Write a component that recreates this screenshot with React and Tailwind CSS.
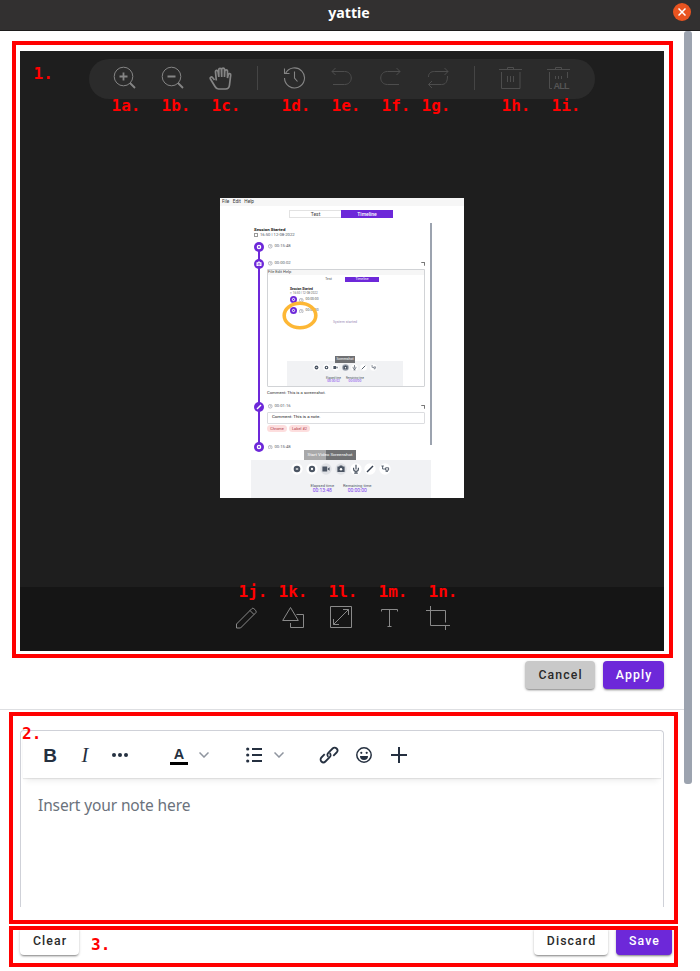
import React from "react";

const Icon = ({ children, w = 24, className = "", sw = 1 }) => (
  <svg width={w} height={w} viewBox="0 0 24 24" fill="none" stroke="currentColor" strokeWidth={sw} className={`shrink-0 ${className}`}>
    {children}
  </svg>
);

const Note = ({ className, children }) => (
  <span className={`absolute font-['DejaVu_Sans_Mono',monospace] text-[16px] leading-4 font-bold whitespace-pre text-[#ff0000] ${className}`}>
    {children}
  </span>
);

const Btn = ({ className, children }) => (
  <button className={`flex h-7 shrink-0 items-center justify-center rounded-[4px] pt-px pl-px font-[Roboto,sans-serif] text-[12.3px] font-medium tracking-[1.1px] shadow-[0_2px_2px_-1px_rgba(0,0,0,0.35),0_1px_3px_rgba(0,0,0,0.22)] ${className}`}>
    {children}
  </button>
);

const Dot = ({ small, kind = "gear" }) => (
  <svg viewBox="0 0 20 20" className={`relative shrink-0 ${small ? "size-[7px]" : "size-[10px]"}`}>
    <circle cx="10" cy="10" r="10" fill="#6d28d9" />
    {kind === "gear" && <circle cx="10" cy="10" r="3.2" fill="none" stroke="#fff" strokeWidth="2.8" />}
    {kind === "camera" && (
      <g>
        <path d="M5 6.500h2.500l1-1.500h3l1 1.500H15V14H5z" fill="#fff" />
        <circle cx="10" cy="10.300" r="2" fill="#fff" stroke="#6d28d9" strokeWidth="1.300" />
      </g>
    )}
    {kind === "pencil" && <path d="M6 14l8-8" stroke="#fff" strokeWidth="3" />}
  </svg>
);

const Clock = () => (
  <svg viewBox="0 0 10 10" className="size-[4.5px] shrink-0" fill="none" stroke="#6b7280">
    <circle cx="5" cy="5" r="4.2" />
    <path d="M5 2.5V5h2" />
  </svg>
);

const Controls = ({ small }) => {
  const shapes = [
    <g key="a"><circle cx="10" cy="10" r="5.5" fill="#4b5563" /><path d="M8 10h4" stroke="#fff" strokeWidth="2" /></g>,
    <circle key="b" cx="10" cy="10" r="3.6" fill="none" stroke="#4b5563" strokeWidth="3.4" />,
    <path key="c" d="M4 6h8v8H4zM13 9l3-2v6l-3-2z" fill="#4b5563" />,
    <g key="d"><path d="M4 6h3l1-2h4l1 2h3v9H4z" fill="#4b5563" /><circle cx="10" cy="10.5" r="2" fill="#fff" /></g>,
    <path key="e" d="M10 3v8M6 8v2a4 4 0 008 0V8M10 14v3M7 17h6" fill="none" stroke="#4b5563" strokeWidth="2" />,
    <path key="f" d="M5 15L15 5" stroke="#374151" strokeWidth="2.4" />,
    <path key="g" d="M4 5h4M6 5v5h5M11 8h5v4h-5zM11 14h4" fill="none" stroke="#4b5563" strokeWidth="1.5" />,
  ];
  return (
    <div className={`flex justify-center ${small ? "gap-[2.4px]" : "gap-[2.7px]"}`}>
      {shapes.map((s, i) => (
        <svg key={i} viewBox="0 0 20 20" className={small ? "size-[7px]" : "size-[12px]"}>
          <circle cx="10" cy="10" r="9.5" fill={i === 3 || (i === 2 && !small) ? (small ? "#9ca3af" : "#dfe1e5") : "#fff"} />
          {s}
        </svg>
      ))}
    </div>
  );
};

const Times = ({ small }) => (
  <div className={`flex justify-center text-center ${small ? "gap-[5px] text-[2.6px] leading-[3px]" : "gap-[9px] text-[4.1px] leading-[5px]"} text-[#4b5563]`}>
    <div>
      <div>Elapsed time</div>
      <div className={`text-[#7c3aed] ${small ? "text-[3.3px]" : "text-[5px]"}`}>{small ? "00:00:02" : "00:13:48"}</div>
    </div>
    <div>
      <div>Remaining time</div>
      <div className={`text-[#7c3aed] ${small ? "text-[3.3px]" : "text-[5px]"}`}>00:00:00</div>
    </div>
  </div>
);

const Row = ({ kind, time, copy }) => (
  <div className="flex h-[10px] items-center">
    <Dot kind={kind} />
    <div className="ml-[4px] flex items-center gap-[2px] text-[4.2px] leading-none text-[#555c66]">
      <Clock />
      {time}
    </div>
    {copy && <span className="ml-auto size-[4px] rounded-[1px] border-t border-r border-[#777]" />}
  </div>
);

const Shot = () => (
  <div className="relative flex h-[300px] w-[244px] shrink-0 flex-col overflow-hidden bg-white font-[Roboto,sans-serif]">
    <div className="flex h-[8px] shrink-0 items-center gap-[3.5px] bg-[#f6f6f6] pl-[2px] text-[4.7px] leading-none text-[#333]">
      <span>File</span><span>Edit</span><span>Help</span>
    </div>
    <div className="mt-[4px] ml-[69px] flex h-[8px] shrink-0 text-center text-[5px] leading-[8px]">
      <span className="w-[52px] border border-r-0 border-[#e2e2e2] leading-[6px] text-[#444]">Test</span>
      <span className="w-[52px] bg-[#6d28d9] font-medium text-white">Timeline</span>
    </div>
    <div className="flex h-[242px] shrink-0 pl-[34px]">
      <div className="relative w-[171px] pt-[9px]">
        <div className="absolute top-[28px] left-[4.3px] h-[202px] w-[1.5px] bg-[#6d28d9]" />
        <div className="text-[4.4px] leading-[5px] font-bold text-[#111]">Session Started</div>
        <div className="flex items-center gap-[2px] text-[4.2px] leading-[6px] text-[#4b5563]">
          <span className="size-[4px] border border-[#999]" />16:50 | 12-08-2022
        </div>
        <div className="mt-[3.5px]"><Row time="00:15:48" /></div>
        <div className="mt-[7px]"><Row kind="camera" time="00:00:02" copy /></div>
        <div className="ml-[13px] flex h-[118.5px] flex-col rounded-b-[1px] border border-[#d1d3d6]">
          <div className="flex h-[5px] items-center bg-[#f6f6f6] text-[4px] leading-none text-[#444]">File Edit Help</div>
          <div className="mt-[2px] ml-[44px] flex h-[5px] text-center text-[3.4px] leading-[5px]">
            <span className="w-[33px] text-[#555]">Test</span>
            <span className="w-[34px] bg-[#6d28d9] text-white">Timeline</span>
          </div>
          <div className="mt-[6.5px] ml-[22px] text-[3.2px] leading-[3.5px] font-bold text-[#111]">Session Started</div>
          <div className="ml-[22px] text-[3px] leading-[3.8px] text-[#666]">▯ 16:50 | 12-08-2022</div>
          <div className="relative mt-[1px] ml-[22px] flex h-[7px] items-center gap-[2px] text-[3.4px] text-[#555]"><Dot small /><Clock />00:00:00</div>
          <div className="mt-[4px] ml-[22px] flex h-[7px] items-center gap-[2px] text-[3.4px] text-[#555]"><Dot small /><Clock />00:00:00</div>
          <div className="mt-[6px] pr-[2px] text-center text-[3.6px] leading-[4px] text-[#9a8cb5]">System started</div>
          <div className="mt-auto ml-[19px] h-[25px] w-[116px] bg-[#f1f2f4] pt-[3px]">
            <Controls small />
            <div className="mt-[6px]"><Times small /></div>
          </div>
        </div>
        <div className="ml-[13px] pt-[1.5px] text-[4.2px] leading-[7px] text-[#333]">Comment: This is a screenshot.</div>
        <div className="mt-[6px]"><Row kind="pencil" time="00:01:16" copy /></div>
        <div className="ml-[13px] flex h-[12px] items-center rounded-[1px] border border-[#dcdde0] pl-[4px] text-[4.4px] leading-none text-[#222]">
          Comment: This is a note.
        </div>
        <div className="mt-[1.5px] ml-[13px] flex gap-[2px] text-center text-[3.9px] leading-[7px] text-[#b03a48]">
          <span className="w-[20px] rounded-full bg-[#fddede]">Chrome</span>
          <span className="w-[21px] rounded-full bg-[#fddede]">Label #2</span>
        </div>
        <div className="mt-[10px]"><Row time="00:15:48" /></div>
      </div>
      <div className="mt-[5px] ml-[5px] h-[222px] w-[2px] bg-[#9ca3af]" />
    </div>
    <div className="ml-[31px] h-[38px] w-[180px] shrink-0 bg-[#f1f2f4] pt-[3px]">
      <Controls />
      <div className="mt-[7.5px]"><Times /></div>
    </div>
    <svg className="absolute top-[102px] left-[61px]" width="38" height="31" fill="none" stroke="#fdb735" strokeWidth="3.6">
      <ellipse cx="19" cy="15.5" rx="15.8" ry="12.3" />
    </svg>
    <div className="absolute top-[158px] left-[115px] h-[6.5px] w-[20px] bg-[#6f7073] text-center text-[3.4px] leading-[6.5px] text-white">Screenshot</div>
    <div className="absolute top-[252px] left-[84px] flex h-[10px] w-[52px] items-center justify-center bg-linear-to-r from-[#a9a9aa] from-42% to-[#707173] to-42% text-[4.4px] leading-none whitespace-nowrap text-white">
      Start Video Screenshot
    </div>
  </div>
);

export default function App() {
  return (
    <div className="relative flex h-[971px] w-[700px] flex-col overflow-hidden bg-white">
      <header className="grid h-[31px] shrink-0 grid-cols-3 items-center border-b border-[#1d1c1c] bg-[#323030]">
        <span />
        <span className="pr-[2px] pb-[5px] text-center font-['Noto_Sans',sans-serif] text-[14.2px] leading-5 font-bold text-white">yattie</span>
        <span className="mr-[9px] mb-[7px] ml-auto flex size-[18px] items-center justify-center rounded-full bg-[#e95420] text-white">
          <svg width="8" height="8" viewBox="0 0 8 8" stroke="currentColor" strokeWidth="1.5"><path d="M.5.5l7 7M7.500.5l-7 7" /></svg>
        </span>
      </header>

      <div className="flex min-h-0 flex-1">
        <main className="flex w-[684px] flex-col">
          <section className="mt-5 ml-5 flex h-[600px] w-[644px] shrink-0 flex-col bg-[#1e1e1e]">
            <div className="mt-2 ml-[69px] flex h-10 w-[506px] shrink-0 items-start rounded-full bg-[#2b2b2b] pt-[7px] pl-[23px] text-[#858585]">
              <div className="flex gap-6">
                <Icon><circle cx="11.500" cy="10.500" r="9.300" /><path d="M7.500 10.500h8M11.500 6.500v8M18 17l5 5" strokeWidth="1.800" /></Icon>
                <Icon><circle cx="11.500" cy="10.500" r="9.300" /><path d="M7.500 10.500h8M18 17l5 5" strokeWidth="1.800" /></Icon>
                <Icon sw={1.7}><path d="M6.500 14L4.500 11.500c-1-1.200-3-.2-2.200 1.300L7 20.500C8 22.300 8.500 23 10.500 23h7c2.500 0 3.700-1 4-4l1.200-10c.2-1.700-2-2-2.400-.4L19.500 12V5.200c0-1.800-2.500-1.800-2.700 0L16.500 11V3.500c0-1.800-2.700-1.800-2.800 0V11l-.4-7.500c-.1-1.700-2.500-1.700-2.500 0V11L10 5.500c-.3-1.600-2.700-1.400-2.500.3l.8 8.700" /></Icon>
              </div>
              <span className="ml-[25px] h-6 w-px bg-[#454545]" />
              <div className="ml-6 flex gap-6 text-[#4d4d4d]">
                <Icon className="text-[#858585]" sw={1.1}><path d="M3.500 7.500A10 10 0 1 1 2.500 12M2.500 2.500v5h5M12.500 5.500V12l3 3.500" /></Icon>
                <Icon><path d="M2 5.500h12.500c9 0 9 13 0 13H3M5.500 2L2 5.500 5.500 9" /></Icon>
                <Icon><path d="M22 5.500H9.500c-9 0-9 13 0 13H21M18.500 2L22 5.500 18.500 9" /></Icon>
                <Icon><path d="M2.500 11c0-4 2.500-5.500 6-5.500H22M18.500 2L22 5.500 18.500 9M21.500 10c0 6-2 8.500-6 8.500H2.500M6 15l-3.500 3.500L6 22" /></Icon>
              </div>
              <span className="ml-6 h-6 w-px bg-[#454545]" />
              <div className="ml-[23px] flex gap-6 text-[#4d4d4d]">
                <Icon><path d="M1 3.500h23M9.500 3V1.500h6V3M3.500 6v16.500h18.500V6M9.500 10v6M12.500 10v6M15.500 10v6" /></Icon>
                <Icon>
                  <path d="M1 3.500h23M9.500 3V1.500h6V3M6 22.500H3.500V6M21.500 6v6M9.500 10v3M12.500 10v3M15.500 10v3" />
                  <text x="7.500" y="23" fill="#555" stroke="none" fontFamily="Liberation Sans" fontWeight="bold" fontSize="9" textLength="16">ALL</text>
                </Icon>
              </div>
            </div>
            <div className="flex flex-1 pt-[99px] pl-[200px]">
              <Shot />
            </div>
            <div className="flex h-16 shrink-0 gap-6 bg-[#151515] pt-[19px] pl-[214px] text-[#8a8a8a]">
              <Icon><path d="M2.500 22v-4L18 2.500c1.200-1.200 5 2.500 4 4L6.500 22zM16 4.500l4 4" /></Icon>
              <Icon><path d="M8.500 1.500L.700 14.500h15.600zM14.500 8.500h7v13h-13v-4.500" /></Icon>
              <Icon><path d="M.500.500h21v21H.500zM3.500 18.500l15-15M13 3.500h5.500V9M3.500 13v5.500H9" /></Icon>
              <Icon><path d="M3.500 5.500v-2h16v2M11.500 3.500v17M9.500 20.500h4" /></Icon>
              <Icon><path d="M0 4.500h19.500v12M4.500 0v19.500H24M19.500 19.500V24" /></Icon>
            </div>
          </section>

          <div className="mt-[10px] flex h-7 shrink-0 justify-end gap-2 pr-5">
            <Btn className="w-[70px] bg-[#c9c9c9] text-[#2a2a2a]">Cancel</Btn>
            <Btn className="w-[61px] bg-[#6d28d9] text-white">Apply</Btn>
          </div>
          <div className="mt-5 h-px shrink-0 bg-[#dedfe2]" />

          <section className="mt-5 ml-5 flex h-[177px] w-[644px] shrink-0 flex-col rounded-t-[4px] border border-b-0 border-[#cfd1d8]">
            <div className="mx-[2px] flex h-[47px] shrink-0 items-center pt-px text-[#253040] shadow-[0_1px_1px_rgba(0,0,0,0.08),0_6px_6px_-3px_rgba(0,0,0,0.07)]">
              <span className="ml-[16px] w-[22px] text-center font-['Liberation_Sans',sans-serif] text-[19px] leading-none font-bold">B</span>
              <span className="ml-[13px] w-[22px] text-center font-['Liberation_Serif',serif] text-[20.5px] leading-none italic">I</span>
              <svg className="ml-[15px]" width="18" height="6" fill="currentColor"><circle cx="3" cy="3" r="2" /><circle cx="9" cy="3" r="2" /><circle cx="15" cy="3" r="2" /></svg>
              <span className="mt-px ml-[41px] flex w-[18px] flex-col items-center border-b-[3px] border-black pb-px font-['Liberation_Sans',sans-serif] text-[14.5px] leading-[14px] font-bold">A</span>
              <svg className="ml-[11px]" width="10" height="6" fill="none" stroke="#8f959f" strokeWidth="1.500"><path d="M.500.500L5 5 9.500.500" /></svg>
              <svg className="ml-[37px]" width="16" height="16" fill="currentColor">
                <circle cx="1.700" cy="2" r="1.600" /><circle cx="1.700" cy="8" r="1.600" /><circle cx="1.700" cy="14" r="1.600" />
                <path d="M6 1h10v2H6zM6 7h10v2H6zM6 13h10v2H6z" />
              </svg>
              <svg className="ml-[12px]" width="10" height="6" fill="none" stroke="#8f959f" strokeWidth="1.500"><path d="M.500.500L5 5 9.500.500" /></svg>
              <svg className="ml-[35px]" width="20" height="20" viewBox="0 0 20 20" fill="none" stroke="currentColor" strokeWidth="1.800">
                <path d="M9.300 11.800c-1.300-1.300-1.200-2.800 0-4l4.300-4.300a2.800 2.800 0 014 4L14.300 10.800M10.700 8.200c1.300 1.300 1.200 2.800 0 4l-4.300 4.300a2.800 2.800 0 01-4-4L5.700 9.200" />
              </svg>
              <svg className="ml-[17px]" width="16" height="16" viewBox="0 0 16 16" fill="none" stroke="currentColor" strokeWidth="1.500">
                <circle cx="8" cy="8" r="7.200" /><path d="M4 9h8a4 4 0 01-8 0z" fill="currentColor" stroke="none" />
                <circle cx="5.300" cy="5.800" r="1.100" fill="currentColor" stroke="none" /><circle cx="10.700" cy="5.800" r="1.100" fill="currentColor" stroke="none" />
              </svg>
              <svg className="ml-[19px]" width="16" height="16" stroke="currentColor" strokeWidth="2"><path d="M0 8h16M8 0v16" /></svg>
            </div>
            <p className="mt-[15px] ml-[17px] font-['Noto_Sans',sans-serif] text-[15.5px] leading-6 tracking-[-0.12px] text-[#6b727c]">Insert your note here</p>
          </section>

          <footer className="mt-5 ml-5 flex h-7 w-[652px] shrink-0 gap-2">
            <Btn className="mr-auto w-[59px] bg-white text-[#2a2a2a]">Clear</Btn>
            <Btn className="w-[74px] bg-white text-[#2a2a2a]">Discard</Btn>
            <Btn className="w-[56px] bg-[#6d28d9] text-white">Save</Btn>
          </footer>
        </main>
        <div className="h-[753px] w-2 rounded-[3px] bg-[#9ca3af]" />
      </div>

      <div className="absolute top-[41px] left-[12px] h-[617px] w-[661px] border-4 border-[#ff0000]" />
      <div className="absolute top-[712px] left-[9px] h-[212px] w-[669px] border-4 border-[#ff0000]" />
      <div className="absolute top-[926px] left-[9px] h-[41px] w-[669px] border-4 border-[#ff0000]" />
      <Note className="top-[66px] left-[33.5px]">1.</Note>
      <Note className="top-[98px] left-[111.5px]">1a.</Note>
      <Note className="top-[98px] left-[161.5px]">1b.</Note>
      <Note className="top-[98px] left-[211.5px]">1c.</Note>
      <Note className="top-[98px] left-[281.5px]">1d.</Note>
      <Note className="top-[98px] left-[331.5px]">1e.</Note>
      <Note className="top-[98px] left-[381.5px]">1f.</Note>
      <Note className="top-[98px] left-[421.5px]">1g.</Note>
      <Note className="top-[98px] left-[501.5px]">1h.</Note>
      <Note className="top-[98px] left-[551.5px]">1i.</Note>
      <Note className="top-[584px] left-[238.5px]">1j.</Note>
      <Note className="top-[584px] left-[278.5px]">1k.</Note>
      <Note className="top-[584px] left-[328.5px]">1l.</Note>
      <Note className="top-[584px] left-[378.5px]">1m.</Note>
      <Note className="top-[584px] left-[428.5px]">1n.</Note>
      <Note className="top-[726px] left-[22px]">2.</Note>
      <Note className="top-[937px] left-[91px] text-[#e00000]">3.</Note>
    </div>
  );
}
